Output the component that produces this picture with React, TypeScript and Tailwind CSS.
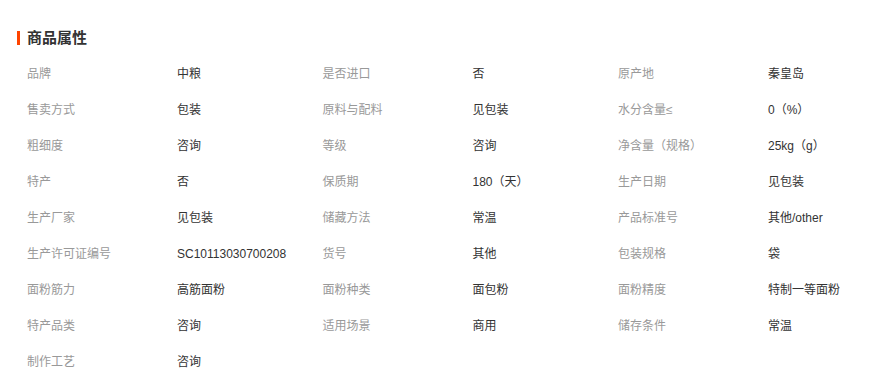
import React from "react";

const rows: [string, string][][] = [
  [["品牌", "中粮"], ["是否进口", "否"], ["原产地", "秦皇岛"]],
  [["售卖方式", "包装"], ["原料与配料", "见包装"], ["水分含量≤", "0（%）"]],
  [["粗细度", "咨询"], ["等级", "咨询"], ["净含量（规格）", "25kg（g）"]],
  [["特产", "否"], ["保质期", "180（天）"], ["生产日期", "见包装"]],
  [["生产厂家", "见包装"], ["储藏方法", "常温"], ["产品标准号", "其他/other"]],
  [["生产许可证编号", "SC10113030700208"], ["货号", "其他"], ["包装规格", "袋"]],
  [["面粉筋力", "高筋面粉"], ["面粉种类", "面包粉"], ["面粉精度", "特制一等面粉"]],
  [["特产品类", "咨询"], ["适用场景", "商用"], ["储存条件", "常温"]],
  [["制作工艺", "咨询"]],
];

export default function App() {
  return (
    <div
      className="w-[894px] h-[370px] bg-white overflow-hidden"
      style={{ fontFamily: '"Liberation Sans", "Noto Sans CJK SC", sans-serif' }}
    >
      <div className="pt-[26px] pl-[17px] flex items-center h-[50px]">
        <div className="w-[3px] h-[14px] bg-[#ff4400]" />
        <div className="ml-[7px] text-[15px] font-bold text-[#333] leading-[24px]">商品属性</div>
      </div>
      <div className="mt-[6px] pl-[27px] flex flex-col">
        {rows.map((r, i) => (
          <div key={i} className="flex h-[36px] items-center text-[12px]">
            {r.map(([k, v], j) => (
              <div key={j} className="flex w-[295.5px] shrink-0">
                <div className="w-[150px] text-[#999]">{k}</div>
                <div className="text-[#333]">{v}</div>
              </div>
            ))}
          </div>
        ))}
      </div>
    </div>
  );
}
